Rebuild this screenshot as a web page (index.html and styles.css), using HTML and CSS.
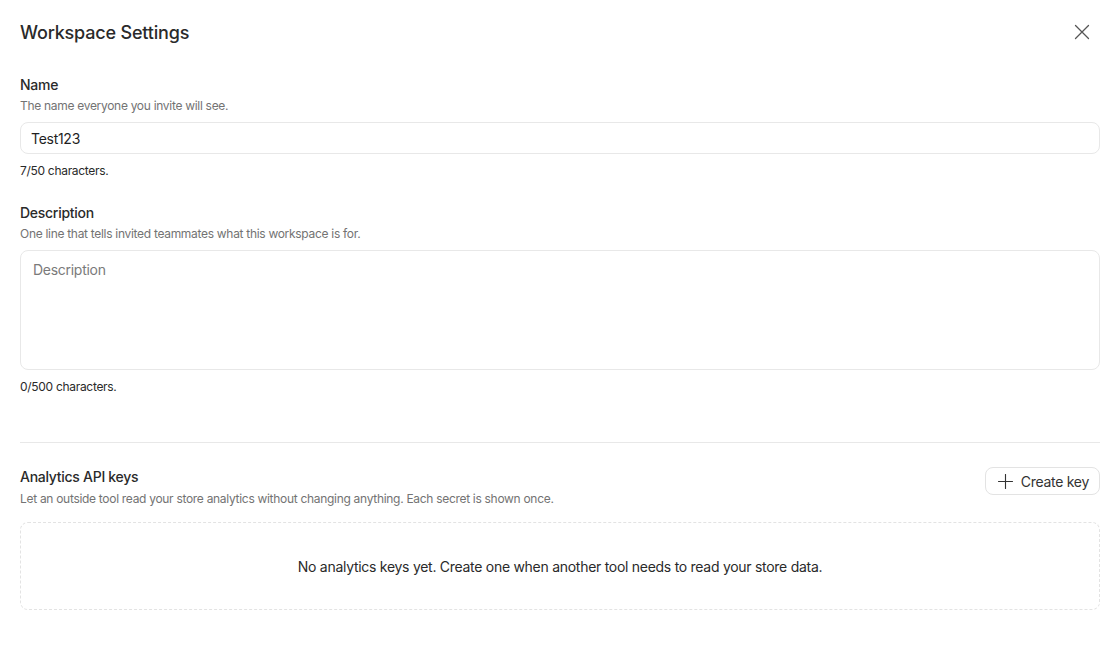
FILE: index.html
```html
<!DOCTYPE html>
<html>
<head>
	<title>Workspace Settings</title>
	<link rel="stylesheet" href="styles.css">
</head>
<body>
	<div class="dialog">
		<div class="dialog-header">
			<h1>Workspace Settings</h1>
			<button class="close-btn" aria-label="Close">
				<svg width="16" height="16" viewBox="0 0 16 16" fill="none" stroke="currentColor" stroke-width="1.3" stroke-linecap="round">
					<path d="M1.5 1.5L14.5 14.5M14.5 1.5L1.5 14.5"/>
				</svg>
			</button>
		</div>

		<div class="field">
			<label for="ws-name">Name</label>
			<p class="hint">The name everyone you invite will see.</p>
			<input type="text" id="ws-name" value="Test123">
			<p class="count">7/50 characters.</p>
		</div>

		<div class="field">
			<label for="ws-desc">Description</label>
			<p class="hint">One line that tells invited teammates what this workspace is for.</p>
			<textarea id="ws-desc" placeholder="Description"></textarea>
			<p class="count">0/500 characters.</p>
		</div>

		<hr class="divider">

		<div class="keys-header">
			<div>
				<h2>Analytics API keys</h2>
				<p class="hint keys-hint">Let an outside tool read your store analytics without changing anything. Each secret is shown once.</p>
			</div>
			<button class="create-btn">
				<svg width="16" height="16" viewBox="0 0 16 16" fill="none" stroke="currentColor" stroke-width="1.2" stroke-linecap="round">
					<path d="M8 0.5V15.5M0.5 8H15.5"/>
				</svg>
				Create key
			</button>
		</div>

		<div class="empty-keys">
			No analytics keys yet. Create one when another tool needs to read your store data.
		</div>
	</div>
</body>
</html>
```

FILE: styles.css
```css
body {
	margin: 0;
	font-family: "Inter", "Liberation Sans", sans-serif;
	color: #1f1f1f;
	background-color: #fff;
}
.dialog {
	padding: 20px 10px 20px 20px;
}
.dialog-header {
	display: flex;
	justify-content: space-between;
	align-items: center;
	height: 24px;
	margin-bottom: 31px;
}
.dialog-header h1 {
	margin: 0;
	font-size: 18px;
	font-weight: 500;
	letter-spacing: -0.01em;
	color: #2a2a2a;
}
.close-btn {
	display: flex;
	align-items: center;
	justify-content: center;
	width: 24px;
	height: 24px;
	padding: 0;
	margin-right: 6px;
	border: none;
	background: none;
	color: #555;
	cursor: pointer;
}
.field {
	margin-bottom: 24px;
}
.field label, .keys-header h2 {
	display: block;
	margin: 0;
	font-size: 14px;
	font-weight: 500;
	line-height: 20px;
	letter-spacing: -0.02em;
	color: #2a2a2a;
}
.hint {
	margin: 2px 0 0;
	font-size: 12px;
	line-height: 18px;
	letter-spacing: -0.025em;
	color: #737373;
}
.keys-hint {
	margin-top: 3px;
}
.field input, .field textarea {
	display: block;
	width: 100%;
	box-sizing: border-box;
	margin-top: 7px;
	border: 1px solid #e8e8e8;
	border-radius: 8px;
	font-family: inherit;
	font-size: 14px;
	letter-spacing: -0.02em;
	color: #1f1f1f;
	background-color: #fff;
	outline: none;
}
.field input {
	height: 32px;
	padding: 0 10px;
}
.field textarea {
	height: 120px;
	padding: 10px 12px;
	resize: none;
}
.field textarea::placeholder {
	color: #7a7a7a;
}
.count {
	margin: 9px 0 0;
	font-size: 12px;
	line-height: 16px;
	letter-spacing: -0.025em;
	color: #2a2a2a;
}
.divider {
	margin: 47px 0 24px;
	border: none;
	border-top: 1px solid #e8e8e8;
}
.keys-header {
	display: flex;
	justify-content: space-between;
	align-items: flex-start;
	margin-bottom: 14px;
}
.create-btn {
	display: flex;
	align-items: center;
	gap: 8px;
	height: 28px;
	padding: 0 10px 0 12px;
	border: 1px solid #e3e3e3;
	border-radius: 8px;
	background-color: #fff;
	font-family: inherit;
	font-size: 14px;
	letter-spacing: -0.02em;
	color: #333;
	cursor: pointer;
}
.create-btn svg {
	width: 15px;
	height: 15px;
}
.empty-keys {
	display: flex;
	align-items: center;
	justify-content: center;
	height: 86px;
	border: 1px dashed #e3e3e3;
	border-radius: 8px;
	font-size: 14px;
	letter-spacing: -0.02em;
	color: #2a2a2a;
}
```
